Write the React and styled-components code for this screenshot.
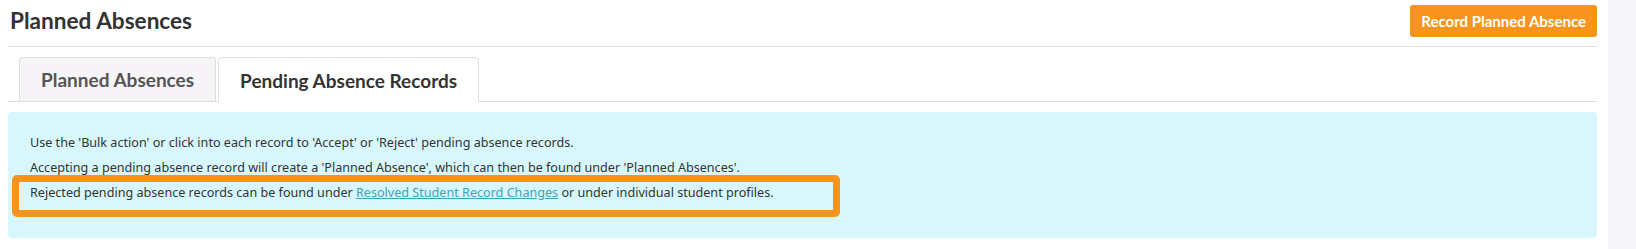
import React from "react";
import styled, { createGlobalStyle } from "styled-components";

const GlobalStyle = createGlobalStyle`
  body {
    margin: 0;
    background: #fff;
    font-family: Lato, "Liberation Sans", sans-serif;
    color: #333;
  }
`;

const Page = styled.div`
  display: flex;
  min-height: 249px;
`;

const Main = styled.div`
  flex: 1;
  padding: 0 11px 0 8px;
`;

const Gutter = styled.div`
  width: 28px;
  background: #f7f6f8;
`;

const Header = styled.div`
  display: flex;
  align-items: center;
  justify-content: space-between;
  height: 47px;
  box-sizing: border-box;
  padding: 0 0 5px 2px;
  border-bottom: 1px solid #dedede;
`;

const Title = styled.h1`
  margin: 0;
  font-size: 22.6px;
  font-weight: 700;
  color: #333;
`;

const Button = styled.button`
  height: 32px;
  padding: 0 11px;
  border: 0;
  border-radius: 3px;
  background: #f7941d;
  color: #fff;
  font-family: inherit;
  font-size: 15px;
  font-weight: 700;
  cursor: pointer;
`;

const Tabs = styled.div`
  display: flex;
  gap: 2px;
  margin-top: 10px;
  padding-left: 11px;
  border-bottom: 1px solid #dedede;
`;

const Tab = styled.div`
  height: ${(p) => (p.$active ? "44px" : "43px")};
  padding: 0 21px;
  display: flex;
  align-items: center;
  border: 1px solid #dedede;
  border-bottom: 0;
  border-radius: 4px 4px 0 0;
  margin-bottom: -1px;
  background: ${(p) => (p.$active ? "#fff" : "#f6f4f6")};
  color: ${(p) => (p.$active ? "#333" : "#555")};
  font-size: 19px;
  font-weight: 700;
`;

const InfoBox = styled.div`
  position: relative;
  margin-top: 10px;
  height: 126px;
  box-sizing: border-box;
  padding: 21px 22px 0;
  background: #d7f7fc;
  border-radius: 4px;
`;

const Line = styled.p`
  margin: 0 0 5px;
  font-family: "Noto Sans", "Open Sans", sans-serif;
  font-size: 12.6px;
  line-height: 20px;
  color: #333;
`;

const Link = styled.a`
  color: #36a6be;
  text-decoration: underline;
`;

const Highlight = styled.div`
  position: absolute;
  left: 4px;
  top: 63px;
  width: 828px;
  height: 42px;
  box-sizing: border-box;
  border: 7px solid #f7941d;
  border-radius: 5px;
  pointer-events: none;
`;

export default function App() {
  return (
    <>
      <GlobalStyle />
      <Page>
        <Main>
          <Header>
            <Title>Planned Absences</Title>
            <Button>Record Planned Absence</Button>
          </Header>
          <Tabs>
            <Tab>Planned Absences</Tab>
            <Tab $active>Pending Absence Records</Tab>
          </Tabs>
          <InfoBox>
            <Line>Use the 'Bulk action' or click into each record to 'Accept' or 'Reject' pending absence records.</Line>
            <Line>Accepting a pending absence record will create a 'Planned Absence', which can then be found under 'Planned Absences'.</Line>
            <Line>
              Rejected pending absence records can be found under <Link href="#">Resolved Student Record Changes</Link> or under individual student profiles.
            </Line>
            <Highlight />
          </InfoBox>
        </Main>
        <Gutter />
      </Page>
    </>
  );
}
